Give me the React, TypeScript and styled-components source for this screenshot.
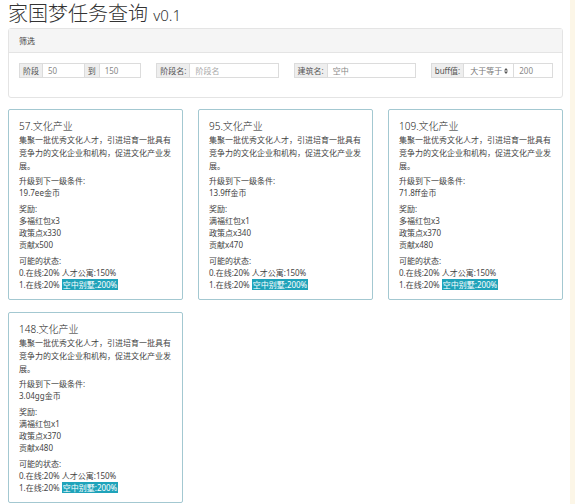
import React from "react";
import styled, { createGlobalStyle } from "styled-components";

const Global = createGlobalStyle`
  html { background: #fcf6e7; }
  body {
    margin: 0;
    font-family: "Noto Sans", "Noto Sans CJK SC", sans-serif;
    color: #333;
  }
  * { box-sizing: border-box; }
`;

const Page = styled.div`
  width: 570px;
  min-height: 504px;
  background: #fff;
  padding: 0 7px 0 8px;
`;

const Title = styled.h1`
  margin: 0;
  height: 28px;
  font-size: 20px;
  line-height: 28px;
  font-weight: 300;
  color: #333;
  white-space: nowrap;
`;

const Version = styled.small`
  font-size: 15px;
  font-weight: 300;
  color: #333;
`;

const Panel = styled.div`
  border: 1px solid #e4e4e4;
  border-radius: 3px;
`;

const PanelHeading = styled.div`
  height: 24px;
  display: flex;
  align-items: center;
  padding: 0 10px;
  background: #f5f5f5;
  border-bottom: 1px solid #e4e4e4;
  font-size: 8px;
  color: #444;
`;

const PanelBody = styled.div`
  display: grid;
  grid-template-columns: repeat(4, 1fr);
  column-gap: 15px;
  padding: 10px 9px 19px 10px;
`;

const InputGroup = styled.div`
  display: flex;
  height: 15px;
`;

const Addon = styled.span<{ $joined?: boolean }>`
  display: flex;
  align-items: center;
  padding: 0 3px;
  background: #eeeeee;
  border: 1px solid #dcdcdc;
  border-left: ${(p) => (p.$joined ? "none" : "1px solid #dcdcdc")};
  font-size: 8px;
  color: #555;
  white-space: nowrap;
`;

const Field = styled.div<{ $placeholder?: boolean; $w?: number }>`
  display: flex;
  align-items: center;
  flex: ${(p) => (p.$w ? `0 0 ${p.$w}px` : "1 1 0")};
  min-width: 0;
  padding: 0 5px;
  border: 1px solid #dcdcdc;
  border-left: none;
  font-size: 8px;
  color: ${(p) => (p.$placeholder ? "#aaa" : "#888")};
  white-space: nowrap;
  background: #fff;
`;

const SelectBox = styled(Field)`
  justify-content: space-between;
  padding: 0 5px 0 6px;
  color: #777;
`;

const Cards = styled.div`
  display: grid;
  grid-template-columns: repeat(3, 175px);
  column-gap: 15px;
  row-gap: 12px;
  margin-top: 11px;
`;

const Card = styled.div`
  border: 1px solid #a3c8d1;
  border-radius: 2px;
  padding: 9px 10px 8px 10px;
  font-size: 8px;
  line-height: 12px;
  color: #444;
`;

const CardTitle = styled.div`
  font-size: 10px;
  line-height: 14px;
  font-weight: 300;
  color: #222;
`;

const Desc = styled.div`
  line-height: 13px;
`;

const Section = styled.div`
  margin-top: 3px;
  & + & { margin-top: 4px; }
`;

const Line = styled.div``;

const Highlight = styled.span`
  background: #1fa3ba;
  color: #fff;
  padding: 0 1px;
`;

const Arrows = () => (
  <svg width="4" height="6" viewBox="0 0 4 6">
    <path d="M2 0 L4 2.4 L0 2.4 Z M2 6 L4 3.6 L0 3.6 Z" fill="#555" />
  </svg>
);

type CardData = {
  id: number;
  cost: string;
  rewards: string[];
};

const cards: CardData[] = [
  { id: 57, cost: "19.7ee金币", rewards: ["多福红包x3", "政策点x330", "贡献x500"] },
  { id: 95, cost: "13.9ff金币", rewards: ["满福红包x1", "政策点x340", "贡献x470"] },
  { id: 109, cost: "71.8ff金币", rewards: ["多福红包x3", "政策点x370", "贡献x480"] },
  { id: 148, cost: "3.04gg金币", rewards: ["满福红包x1", "政策点x370", "贡献x480"] },
];

export default function App() {
  return (
    <Page>
      <Global />
      <Title>
        家国梦任务查询 <Version>v0.1</Version>
      </Title>
      <Panel>
        <PanelHeading>筛选</PanelHeading>
        <PanelBody>
          <InputGroup>
            <Addon>阶段</Addon>
            <Field>50</Field>
            <Addon $joined>到</Addon>
            <Field>150</Field>
          </InputGroup>
          <InputGroup>
            <Addon>阶段名:</Addon>
            <Field $placeholder>阶段名</Field>
          </InputGroup>
          <InputGroup>
            <Addon>建筑名:</Addon>
            <Field>空中</Field>
          </InputGroup>
          <InputGroup>
            <Addon>buff值:</Addon>
            <SelectBox $w={50}>
              大于等于
              <Arrows />
            </SelectBox>
            <Field>200</Field>
          </InputGroup>
        </PanelBody>
      </Panel>
      <Cards>
        {cards.map((c) => (
          <Card key={c.id}>
            <CardTitle>{c.id}.文化产业</CardTitle>
            <Desc>集聚一批优秀文化人才，引进培育一批具有竞争力的文化企业和机构，促进文化产业发展。</Desc>
            <Section>
              <Line>升级到下一级条件:</Line>
              <Line>{c.cost}</Line>
            </Section>
            <Section>
              <Line>奖励:</Line>
              {c.rewards.map((r) => (
                <Line key={r}>{r}</Line>
              ))}
            </Section>
            <Section>
              <Line>可能的状态:</Line>
              <Line>0.在线:20% 人才公寓:150%</Line>
              <Line>
                1.在线:20% <Highlight>空中别墅:200%</Highlight>
              </Line>
            </Section>
          </Card>
        ))}
      </Cards>
    </Page>
  );
}
